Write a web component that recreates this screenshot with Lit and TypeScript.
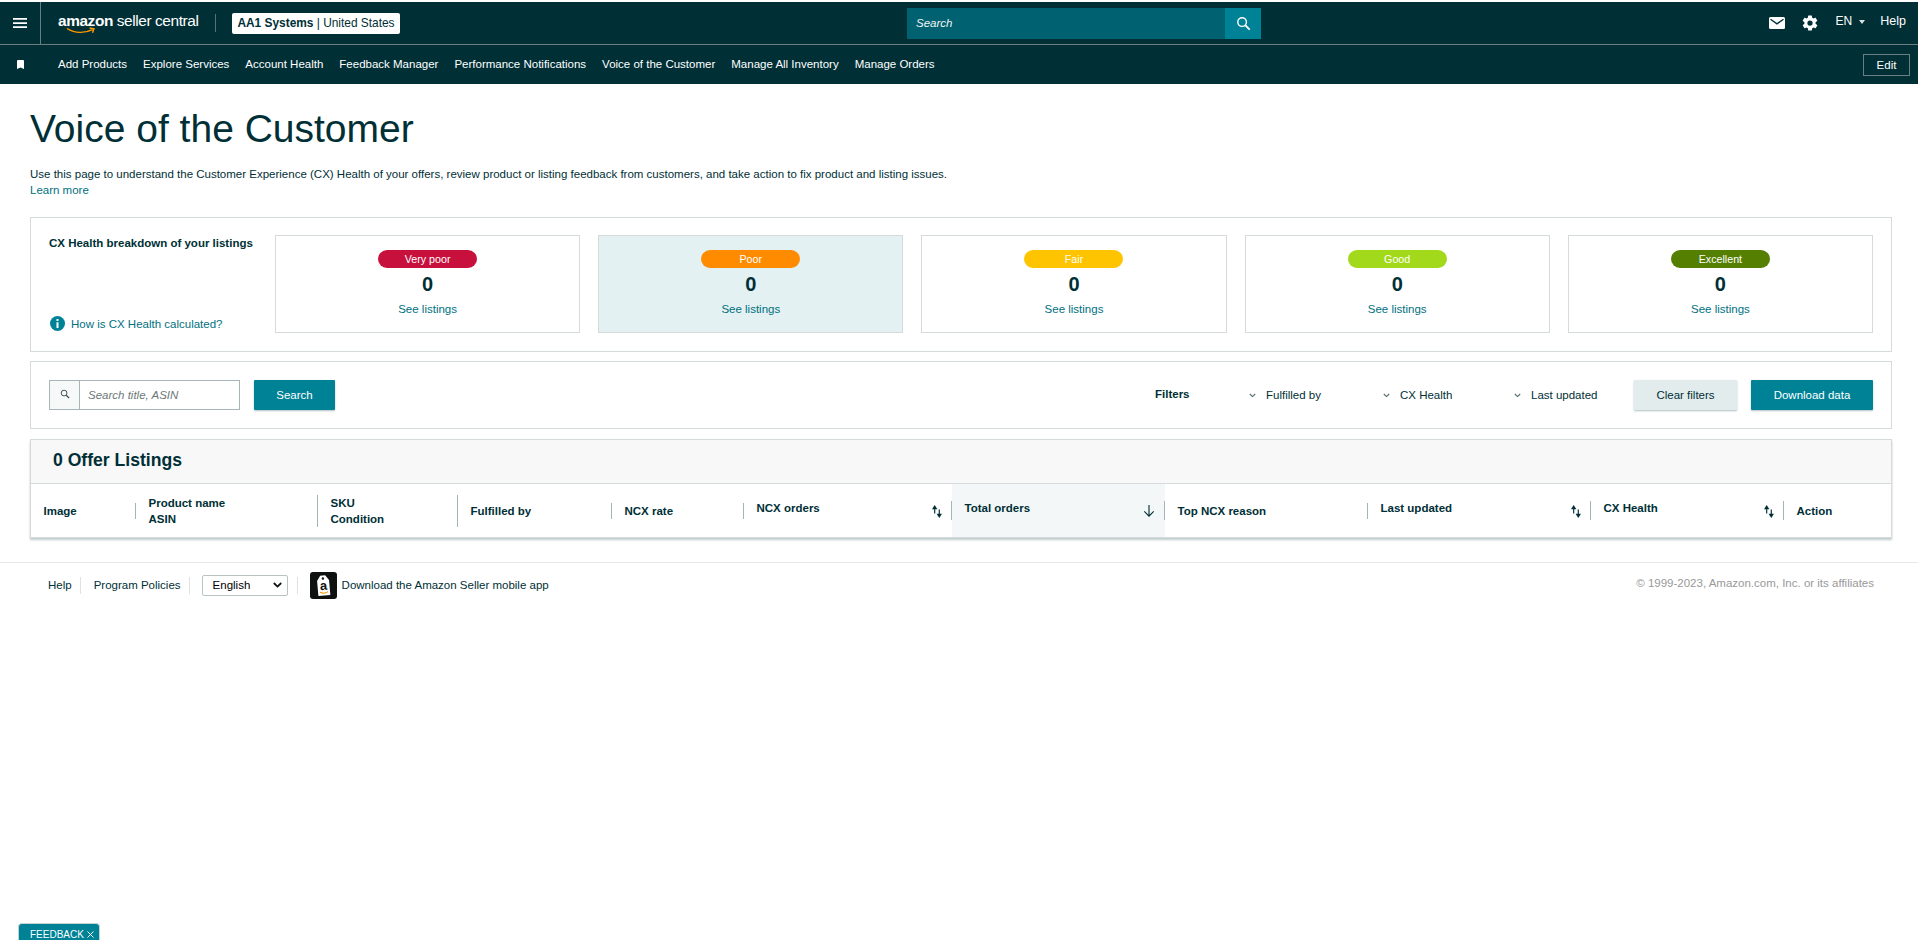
import { LitElement, css, html, svg } from "lit";
import { customElement } from "lit/decorators.js";

const NAV = [
    "Add Products",
    "Explore Services",
    "Account Health",
    "Feedback Manager",
    "Performance Notifications",
    "Voice of the Customer",
    "Manage All Inventory",
    "Manage Orders",
];

const HEALTH = [
    { label: "Very poor", color: "#c8103c", active: false },
    { label: "Poor", color: "#ff8c00", active: true },
    { label: "Fair", color: "#ffc400", active: false },
    { label: "Good", color: "#a3d91b", active: false },
    { label: "Excellent", color: "#557f00", active: false },
];

const searchIcon = (size: number, color: string) => html`
    <svg width=${size} height=${size} viewBox="0 0 16 16" fill="none" stroke=${color}>
        <circle cx="6.5" cy="6.5" r="4.6" stroke-width="1.5"></circle>
        <path d="M10 10l4.6 4.6" stroke-width="2"></path>
    </svg>
`;

const chevron = html`
    <svg class="chev" width="7" height="5" viewBox="0 0 7 5" fill="none" stroke="#53686c" stroke-width="1.1">
        <path d="M.8 1l2.7 2.6L6.2 1"></path>
    </svg>
`;

const sortIcon = html`
    <svg class="sort" width="10" height="13" viewBox="0 0 13 17">
        ${svg`
            <path d="M3.5 11V2M1.4 4.8L3.5 1.500l2.100 3.300z" stroke="#002f36" stroke-width="1.500" fill="#002f36"></path>
            <path d="M9.500 6v9M7.400 12.200l2.100 3.300 2.100-3.300z" stroke="#002f36" stroke-width="1.500" fill="#002f36"></path>
        `}
    </svg>
`;

@customElement("app-root")
export class AppRoot extends LitElement {
    static styles = css`
        :host {
            display: block;
            padding-top: 2px;
            min-height: 938px;
            background: #fff;
            color: #002f36;
            font-family: "Liberation Sans", Arial, sans-serif;
            font-size: 11.5px;
        }
        a {
            color: inherit;
            text-decoration: none;
        }
        svg {
            display: block;
            flex: none;
        }
        .top {
            background: #002f36;
            color: #fff;
        }
        .row1 {
            height: 42px;
            display: grid;
            grid-template-columns: 907px 354px 1fr;
            border-bottom: 1px solid #6a7f82;
        }
        .left,
        .right {
            display: flex;
            align-items: center;
        }
        .menu {
            width: 41px;
            height: 42px;
            display: flex;
            align-items: center;
            justify-content: center;
            box-sizing: border-box;
            border-right: 1px solid #6a7f82;
        }
        .logo {
            margin-left: 17px;
            width: 157px;
            height: 26px;
            padding-top: 2px;
            box-sizing: border-box;
            display: flex;
            flex-direction: column;
            line-height: 18px;
            white-space: nowrap;
        }
        .logo-text {
            font-size: 15.4px;
            letter-spacing: -0.4px;
        }
        .smile {
            margin: -3px 0 0 8px;
        }
        .logo-sep {
            width: 1px;
            height: 18px;
            background: #5a7075;
        }
        .account {
            margin-left: 16px;
            width: 168px;
            height: 21px;
            display: flex;
            align-items: center;
            justify-content: center;
            background: #fff;
            color: #002f36;
            border-radius: 2px;
            font-size: 11.9px;
            white-space: nowrap;
        }
        .search {
            margin-top: 6px;
            height: 31px;
            display: flex;
            background: #006170;
        }
        .search span {
            flex: 1;
            padding-left: 9px;
            font-style: italic;
            line-height: 31px;
            color: #f2f7f7;
        }
        .search div {
            width: 36px;
            background: #008296;
            display: flex;
            align-items: center;
            justify-content: center;
        }
        .right {
            justify-content: flex-end;
            padding: 0 12px 4px 0;
            font-size: 12px;
        }
        .mail {
            margin: 4px 16px 0 0;
        }
        .gear {
            margin: 4px 17px 0 0;
        }
        .caret {
            width: 0;
            height: 0;
            margin: 2px 15px 0 7px;
            border: 3.5px solid transparent;
            border-top: 4px solid #d8dfdf;
            border-bottom: 0;
        }
        .help {
            font-size: 12.5px;
        }
        .row2 {
            height: 39px;
            display: flex;
            align-items: center;
            padding-right: 8px;
        }
        .mark {
            margin-left: 17px;
        }
        .nav {
            margin: -2px 0 0 34px;
            display: flex;
            gap: 16px;
            flex: 1;
            white-space: nowrap;
        }
        .edit {
            width: 47px;
            height: 22px;
            box-sizing: border-box;
            border: 1px solid #6a7f82;
            text-align: center;
            line-height: 20px;
        }
        .page {
            padding: 0 26px 0 30px;
        }
        h1 {
            margin: 25px 0 0;
            font-size: 39px;
            font-weight: 400;
            line-height: 40px;
        }
        .intro {
            margin: 17px 0 0;
            line-height: 16px;
        }
        .link {
            color: #00707f;
        }
        .panel {
            border: 1px solid #d5dbdb;
            box-sizing: border-box;
        }
        .health {
            margin-top: 19px;
            height: 135px;
            padding: 17px 18px 0;
            display: flex;
        }
        .health-info {
            width: 226px;
            flex: none;
            height: 97px;
            display: flex;
            flex-direction: column;
            justify-content: space-between;
        }
        .health-info b {
            line-height: 16px;
        }
        .how {
            display: flex;
            align-items: center;
            gap: 6px;
            padding: 0 0 1px 1px;
            color: #00707f;
        }
        .cards {
            flex: 1;
            display: grid;
            grid-template-columns: repeat(5, 1fr);
            gap: 18px;
        }
        .card {
            height: 98px;
            box-sizing: border-box;
            border: 1px solid #d5dbdb;
            display: flex;
            flex-direction: column;
            align-items: center;
            padding-top: 14px;
        }
        .card.active {
            background: #e3f1f2;
        }
        .pill {
            width: 99px;
            height: 18px;
            border-radius: 9px;
            color: #fff;
            text-align: center;
            line-height: 18px;
            font-size: 10.7px;
        }
        .count {
            margin-top: 4px;
            font-size: 20px;
            font-weight: 700;
            line-height: 24px;
        }
        .card .link {
            margin-top: 5px;
            line-height: 16px;
        }
        .toolbar {
            margin-top: 9px;
            height: 68px;
            display: flex;
            align-items: center;
            padding: 0 18px;
        }
        .field {
            width: 191px;
            height: 30px;
            box-sizing: border-box;
            border: 1px solid #a6b5b7;
            display: flex;
        }
        .field div {
            width: 30px;
            padding-bottom: 2px;
            box-sizing: border-box;
            border-right: 1px solid #a6b5b7;
            background: #f7f8f8;
            display: flex;
            align-items: center;
            justify-content: center;
        }
        .field span {
            padding-left: 8px;
            line-height: 28px;
            font-style: italic;
            color: #6c7778;
        }
        .btn {
            height: 30px;
            display: flex;
            align-items: center;
            justify-content: center;
            border-radius: 1px;
            box-shadow: 0 1px 2px rgba(0, 47, 54, 0.3);
        }
        .btn.primary {
            background: #008296;
            color: #fff;
        }
        .btn.light {
            background: #e3ecec;
        }
        .btn-search {
            width: 81px;
            margin-left: 14px;
            margin-right: auto;
        }
        .filters {
            width: 94px;
        }
        .filters-title {
            margin-bottom: 2px;
            font-weight: 700;
        }
        .filter {
            display: flex;
            align-items: center;
            gap: 10px;
            white-space: nowrap;
        }
        .f1 {
            width: 134px;
        }
        .f2 {
            width: 131px;
        }
        .f3 {
            width: 120px;
        }
        .btn-clear {
            width: 103px;
        }
        .btn-down {
            width: 122px;
            margin-left: 14px;
        }
        .table {
            margin-top: 10px;
            height: 99px;
            box-shadow: 0 2px 2px rgba(0, 47, 54, 0.25);
        }
        .table-title {
            height: 44px;
            box-sizing: border-box;
            background: #f8f8f8;
            border-bottom: 1px solid #d5dbdb;
            padding-left: 22px;
            line-height: 40px;
            font-size: 17.6px;
            font-weight: 700;
        }
        .head {
            height: 53px;
            display: grid;
            grid-template-columns: 105px 182px 140px 154px 132px 208px 213px 203px 223px 193px 1fr;
            font-weight: 700;
        }
        .cell {
            display: flex;
            align-items: center;
            padding-left: 12.5px;
            line-height: 16px;
        }
        .cell.sorted {
            background: #f3f7f7;
        }
        .cell .txt {
            flex: 1;
        }
        .cell .up {
            margin-top: -5px;
        }
        .sep {
            width: 1px;
            height: 16px;
            background: #a6b5b7;
            flex: none;
        }
        .sep.tall {
            height: 32px;
        }
        .sep.mid {
            height: 19px;
        }
        .sort {
            margin: 1px 9px 0 0;
        }
        .footer {
            margin-top: 24px;
            height: 46px;
            padding: 0 44px 1px 48px;
            box-sizing: border-box;
            border-top: 1px solid #e6e9e9;
            display: flex;
            align-items: center;
        }
        .vsep {
            width: 1px;
            height: 17px;
            background: #dde2e2;
        }
        .vsep.a {
            margin: 0 13px 0 8px;
        }
        .vsep.b {
            margin-left: 8px;
        }
        .select {
            width: 86px;
            height: 21px;
            box-sizing: border-box;
            border: 1px solid #b8c3c4;
            border-radius: 2px;
            display: flex;
            align-items: center;
            justify-content: space-between;
            padding: 0 5px 0 10px;
            margin: 0 9px 0 12px;
            color: #000;
        }
        .app {
            margin: 0 5px 0 12px;
        }
        .copy {
            margin: -4px 0 0 auto;
            color: #999;
        }
        .feedback {
            position: fixed;
            left: 18px;
            bottom: 0;
            width: 82px;
            height: 17px;
            box-sizing: border-box;
            padding: 5px 0 0 11px;
            display: flex;
            align-items: center;
            gap: 3px;
            background: #008296;
            color: #fff;
            border: 1px solid #c5d2d3;
            border-bottom: 0;
            border-radius: 4px 4px 0 0;
            font-size: 10px;
        }
    `;

    renderHead() {
        return html`
            <div class="head">
                <div class="cell"><span class="txt">Image</span><i class="sep"></i></div>
                <div class="cell"><span class="txt">Product name<br />ASIN</span><i class="sep tall"></i></div>
                <div class="cell"><span class="txt">SKU<br />Condition</span><i class="sep tall"></i></div>
                <div class="cell"><span class="txt">Fulfilled by</span><i class="sep"></i></div>
                <div class="cell"><span class="txt">NCX rate</span><i class="sep"></i></div>
                <div class="cell"><span class="txt up">NCX orders</span>${sortIcon}<i class="sep mid"></i></div>
                <div class="cell sorted">
                    <span class="txt up">Total orders</span>
                    <svg class="sort" width="12" height="14" viewBox="0 0 14 16" fill="none" stroke="#002f36" stroke-width="1.3">
                        <path d="M7 1v13M1.500 8.500L7 14l5.500-5.500"></path>
                    </svg>
                    <i class="sep mid"></i>
                </div>
                <div class="cell"><span class="txt">Top NCX reason</span><i class="sep"></i></div>
                <div class="cell"><span class="txt up">Last updated</span>${sortIcon}<i class="sep mid"></i></div>
                <div class="cell"><span class="txt up">CX Health</span>${sortIcon}<i class="sep mid"></i></div>
                <div class="cell"><span class="txt">Action</span></div>
            </div>
        `;
    }

    render() {
        return html`
            <header class="top">
                <div class="row1">
                    <div class="left">
                        <div class="menu">
                            <svg width="14" height="10" viewBox="0 0 14 10" fill="#fff">
                                <path d="M0 0h14v1.7H0zM0 4.2h14v1.7H0zM0 8.3h14V10H0z"></path>
                            </svg>
                        </div>
                        <div class="logo">
                            <span class="logo-text"><b>amazon</b> seller central</span>
                            <svg class="smile" width="30" height="8" viewBox="0 0 30 8" fill="none" stroke="#ff9900" stroke-width="1.4">
                                <path d="M1 1.5c8 5 18 5 26 .8M23.5 1l4.5.8-1.5 4"></path>
                            </svg>
                        </div>
                        <i class="logo-sep"></i>
                        <div class="account"><b>AA1 Systems</b>&nbsp;|&nbsp;United States</div>
                    </div>
                    <div class="search">
                        <span>Search</span>
                        <div>${searchIcon(15, "#fff")}</div>
                    </div>
                    <div class="right">
                        <svg class="mail" width="16" height="12" viewBox="0 0 16 12">
                            <rect width="16" height="12" rx="1.5" fill="#fff"></rect>
                            <path d="M1.5 2.2L8 6.8l6.5-4.6" fill="none" stroke="#002f36" stroke-width="1.4"></path>
                        </svg>
                        <svg class="gear" width="18" height="18" viewBox="0 0 24 24" fill="#fff">
                            <path d="M19.4 13c.05-.33.07-.66.07-1s-.02-.67-.07-1l2.1-1.65c.2-.15.25-.42.12-.64l-2-3.46c-.12-.22-.39-.3-.61-.22l-2.49 1c-.52-.4-1.08-.73-1.69-.98l-.38-2.65A.49.49 0 0 0 14 2h-4c-.25 0-.46.18-.49.42l-.38 2.65c-.61.25-1.17.59-1.69.98l-2.49-1c-.23-.09-.49 0-.61.22l-2 3.46c-.13.22-.07.49.12.64L4.6 11c-.05.33-.08.67-.08 1s.03.67.08 1l-2.1 1.65c-.2.15-.25.42-.12.64l2 3.46c.12.22.39.3.61.22l2.49-1c.52.4 1.08.73 1.69.98l.38 2.65c.03.24.24.42.49.42h4c.25 0 .46-.18.49-.42l.38-2.65c.61-.25 1.17-.59 1.69-.98l2.49 1c.23.09.49 0 .61-.22l2-3.46c.12-.22.07-.49-.12-.64L19.4 13zM12 15.5a3.5 3.5 0 1 1 0-7 3.5 3.5 0 0 1 0 7z"></path>
                        </svg>
                        <span>EN</span>
                        <i class="caret"></i>
                        <span class="help">Help</span>
                    </div>
                </div>
                <div class="row2">
                    <svg class="mark" width="7" height="9" viewBox="0 0 7 9" fill="#fff">
                        <path d="M0 1a1 1 0 0 1 1-1h5a1 1 0 0 1 1 1v8L3.5 7.4 0 9z"></path>
                    </svg>
                    <nav class="nav">${NAV.map((n) => html`<a href="#">${n}</a>`)}</nav>
                    <div class="edit">Edit</div>
                </div>
            </header>

            <main class="page">
                <h1>Voice of the Customer</h1>
                <p class="intro">
                    Use this page to understand the Customer Experience (CX) Health of your offers, review product or listing feedback from customers, and take action to fix product and listing issues.<br />
                    <a class="link" href="#">Learn more</a>
                </p>

                <section class="panel health">
                    <div class="health-info">
                        <b>CX Health breakdown of your listings</b>
                        <a class="how" href="#">
                            <svg width="15" height="15" viewBox="0 0 15 15">
                                <circle cx="7.5" cy="7.5" r="7.5" fill="#008296"></circle>
                                <path d="M6.5 3h2v2h-2zM6.5 6.2h2V12h-2z" fill="#fff"></path>
                            </svg>
                            How is CX Health calculated?
                        </a>
                    </div>
                    <div class="cards">
                        ${HEALTH.map(
                            (h) => html`
                                <div class="card ${h.active ? "active" : ""}">
                                    <div class="pill" style="background:${h.color}">${h.label}</div>
                                    <div class="count">0</div>
                                    <a class="link" href="#">See listings</a>
                                </div>
                            `
                        )}
                    </div>
                </section>

                <section class="panel toolbar">
                    <div class="field">
                        <div>${searchIcon(10, "#37494d")}</div>
                        <span>Search title, ASIN</span>
                    </div>
                    <div class="btn primary btn-search">Search</div>
                    <div class="filters filters-title">Filters</div>
                    <div class="filter f1">${chevron}<span>Fulfilled by</span></div>
                    <div class="filter f2">${chevron}<span>CX Health</span></div>
                    <div class="filter f3">${chevron}<span>Last updated</span></div>
                    <div class="btn light btn-clear">Clear filters</div>
                    <div class="btn primary btn-down">Download data</div>
                </section>

                <section class="panel table">
                    <div class="table-title">0 Offer Listings</div>
                    ${this.renderHead()}
                </section>
            </main>

            <footer class="footer">
                <a href="#">Help</a>
                <i class="vsep a"></i>
                <a href="#">Program Policies</a>
                <i class="vsep b"></i>
                <div class="select">
                    <span>English</span>
                    <svg width="9" height="6" viewBox="0 0 9 6" fill="none" stroke="#111" stroke-width="1.8">
                        <path d="M.8 1l3.7 3.6L8.200 1"></path>
                    </svg>
                </div>
                <i class="vsep"></i>
                <svg class="app" width="27" height="27" viewBox="0 0 27 27">
                    <rect width="27" height="27" rx="3" fill="#0f1111"></rect>
                    <g transform="rotate(-5 13.500 13.500)">
                        <path d="M7.500 8.500L11 3.500h5l3.500 5v15h-12z" fill="#fff"></path>
                        <circle cx="13.500" cy="6.500" r="1.200" fill="#0f1111"></circle>
                        <text x="13.500" y="18" text-anchor="middle" font-size="13" font-weight="700" fill="#0f1111">a</text>
                        <path d="M9.500 20c2.500 1.500 5.500 1.500 8 0" fill="none" stroke="#ff9900" stroke-width="1.100"></path>
                    </g>
                </svg>
                <a href="#">Download the Amazon Seller mobile app</a>
                <span class="copy">© 1999-2023, Amazon.com, Inc. or its affiliates</span>
            </footer>

            <div class="feedback">
                FEEDBACK
                <svg width="7" height="7" viewBox="0 0 7 7" fill="none" stroke="#fff"><path d="M.5.5l6 6M6.500.5l-6 6"></path></svg>
            </div>
        `;
    }
}
